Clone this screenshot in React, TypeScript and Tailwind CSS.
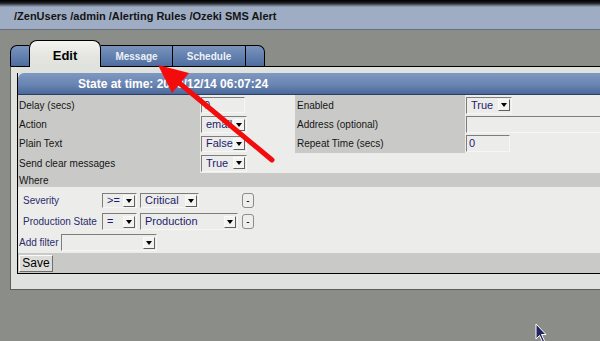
import React from 'react';

interface SelectProps {
  value: string;
  className: string;
}

const Select: React.FC<SelectProps> = ({ value, className }) => (
  <div
    className={`flex items-center border border-t-[#7d7e7b] border-l-[#7d7e7b] border-b-[#f6f6f4] border-r-[#f6f6f4] bg-[#ecedea] ${className}`}
  >
    <span className="flex-1 overflow-hidden whitespace-nowrap pl-[4px] text-[11px] leading-none text-[#1c1c6e]">
      {value}
    </span>
    <span className="mr-[1px] flex h-[12px] w-[12px] items-center justify-center border border-t-[#fafaf8] border-l-[#fafaf8] border-b-[#5f605d] border-r-[#5f605d] bg-[#f3f3f1]">
      <span className="h-0 w-0 border-l-[3px] border-r-[3px] border-t-[4px] border-l-transparent border-r-transparent border-t-black" />
    </span>
  </div>
);

const TextInput: React.FC<SelectProps> = ({ value, className }) => (
  <div
    className={`flex items-center border border-t-[#7d7e7b] border-l-[#7d7e7b] border-b-[#f6f6f4] border-r-[#f6f6f4] bg-[#ecedea] pl-[2px] text-[11px] leading-none text-[#1c1c6e] ${className}`}
  >
    {value}
  </div>
);

const MinusButton = () => (
  <div className="flex h-[15px] w-[12px] items-center justify-center rounded-[3px] border border-[#8c8d8a] bg-[#eeefeb] text-[10px] leading-none text-black">
    -
  </div>
);

export default function App() {
  return (
    <div className="relative h-[341px] w-[600px] overflow-hidden bg-[#8b8d89] font-['Liberation_Sans',Arial,sans-serif]">
      {/* breadcrumb bar */}
      <div className="flex h-[30px] items-center border-b border-[#66707f] bg-[linear-gradient(#000_0px,#1a1c20_3px,#9eadc3_7px,#9eadc3_100%)] pl-[14px] pt-[4px] text-[11px] font-bold text-[#141414]">
        /ZenUsers /admin /Alerting Rules /Ozeki SMS Alert
      </div>

      {/* tabs */}
      <div className="mt-[10px] flex h-[26px] items-end pl-[10px]">
        <div className="h-[21px] w-[19px] rounded-tl-[7px] border-l border-t border-black bg-[linear-gradient(#7a94bd,#4e6d9f)]" />
        <div className="relative z-10 -mb-[1px] flex h-[27px] w-[72px] justify-center rounded-t-[8px] border border-b-0 border-black bg-[linear-gradient(#f3f3f0,#e4e5e1_60%,#e0e2de)] pt-[5px] text-[13px] font-bold text-black">
          Edit
        </div>
        <div className="flex h-[21px] w-[72px] items-center justify-center border-r border-t border-black bg-[linear-gradient(#7a94bd,#4e6d9f)] text-[10px] font-bold text-[#eef1f7]">
          Message
        </div>
        <div className="flex h-[21px] w-[73px] items-center justify-center border-r border-t border-black bg-[linear-gradient(#7a94bd,#4e6d9f)] text-[10px] font-bold text-[#eef1f7]">
          Schedule
        </div>
        <div className="h-[21px] w-[19px] rounded-tr-[7px] border-r border-t border-black bg-[linear-gradient(#7a94bd,#4e6d9f)]" />
      </div>

      {/* panel */}
      <div className="ml-[10px] border-b border-l border-t border-b-[#5d5f5c] border-l-[#5d5f5c] border-t-black bg-[#e0e2de] pb-[15px] pl-[6px] pt-[6px]">
        <div className="border-b border-l border-black">
          <div className="flex h-[22px] items-center rounded-tl-[6px] border-b border-[#2c3f63] bg-[linear-gradient(#7f98c1,#6985b2_55%,#4a699b)] pl-[60px] text-[12px] font-bold text-white">
            State at time: 2009/12/14 06:07:24
          </div>

          <div className="grid grid-cols-[182px_95px_170px_1fr] text-[10px] text-[#151515]">
            <div className="flex h-[20px] items-center bg-[#c9cac7] pl-[1px]">Delay (secs)</div>
            <div className="flex h-[20px] items-center bg-[#ecedea] pl-[1px]">
              <TextInput value="0" className="h-[16px] w-[44px]" />
            </div>
            <div className="flex h-[20px] items-center bg-[#c9cac7] pl-[2px]">Enabled</div>
            <div className="flex h-[20px] items-center bg-[#ecedea] pl-[1px]">
              <Select value="True" className="h-[17px] w-[46px]" />
            </div>

            <div className="flex h-[19px] items-center bg-[#c9cac7] pl-[1px]">Action</div>
            <div className="flex h-[19px] items-center bg-[#ecedea] pl-[1px]">
              <Select value="email" className="h-[17px] w-[46px]" />
            </div>
            <div className="flex h-[19px] items-center bg-[#c9cac7] pl-[2px]">Address (optional)</div>
            <div className="flex h-[19px] items-center bg-[#ecedea] pl-[1px]">
              <TextInput value="" className="h-[17px] w-[150px]" />
            </div>

            <div className="flex h-[19px] items-center bg-[#c9cac7] pl-[1px]">Plain Text</div>
            <div className="flex h-[19px] items-center bg-[#ecedea] pl-[1px]">
              <Select value="False" className="h-[16px] w-[46px]" />
            </div>
            <div className="flex h-[19px] items-center bg-[#c9cac7] pl-[2px]">Repeat Time (secs)</div>
            <div className="flex h-[19px] items-center bg-[#ecedea] pl-[1px]">
              <TextInput value="0" className="h-[17px] w-[44px]" />
            </div>

            <div className="flex h-[20px] items-center bg-[#c9cac7] pl-[1px]">Send clear messages</div>
            <div className="flex h-[20px] items-center bg-[#ecedea] pl-[1px]">
              <Select value="True" className="h-[17px] w-[46px]" />
            </div>
            <div className="h-[20px] bg-[#ecedea]" />
            <div className="h-[20px] bg-[#ecedea]" />
          </div>

          <div className="flex h-[14px] items-center bg-[#c9cac7] pl-[1px] text-[10px] text-[#151515]">Where</div>

          <div className="flex h-[66px] flex-col bg-[#ecedea] pt-[5px] text-[10px] text-[#2b2b6e]">
            <div className="flex h-[17px] items-center">
              <span className="w-[84px] pl-[5px]">Severity</span>
              <Select value=">=" className="h-[15px] w-[35px]" />
              <Select value="Critical" className="ml-[3px] h-[15px] w-[59px]" />
              <div className="ml-[43px]">
                <MinusButton />
              </div>
            </div>
            <div className="mt-[4px] flex h-[17px] items-center">
              <span className="w-[84px] pl-[5px]">Production State</span>
              <Select value="=" className="h-[17px] w-[35px]" />
              <Select value="Production" className="ml-[3px] h-[17px] w-[98px]" />
              <div className="ml-[4px]">
                <MinusButton />
              </div>
            </div>
            <div className="mt-[4px] flex h-[17px] items-center">
              <span className="w-[43px] pl-[1px]">Add filter</span>
              <Select value="" className="h-[17px] w-[96px]" />
            </div>
          </div>

          <div className="flex h-[20px] items-center bg-[#c9cac7] pl-[1px]">
            <div className="flex h-[17px] w-[34px] items-center justify-center border border-t-[#fbfbf9] border-l-[#fbfbf9] border-b-[#6e6f6c] border-r-[#6e6f6c] bg-[#dcddd9] text-[12px] leading-none text-black">
              Save
            </div>
          </div>
        </div>
      </div>

      {/* annotation arrow */}
      <svg className="pointer-events-none absolute left-0 top-0" width="600" height="341" viewBox="0 0 600 341">
        <line x1="272" y1="160" x2="178" y2="82" stroke="#f40b0b" strokeWidth="5" strokeLinecap="round" />
        <polygon points="158,65 189,73 172,93" fill="#f40b0b" />
      </svg>

      {/* mouse pointer */}
      <svg className="pointer-events-none absolute left-[534px] top-[323px]" width="14" height="20" viewBox="0 0 14 20">
        <polygon points="2,1 2,16 5.5,12.5 8.5,19 10.5,18 7.5,11.5 12,11.5" fill="#23235e" stroke="#ffffff" strokeWidth="1" />
      </svg>
    </div>
  );
}
